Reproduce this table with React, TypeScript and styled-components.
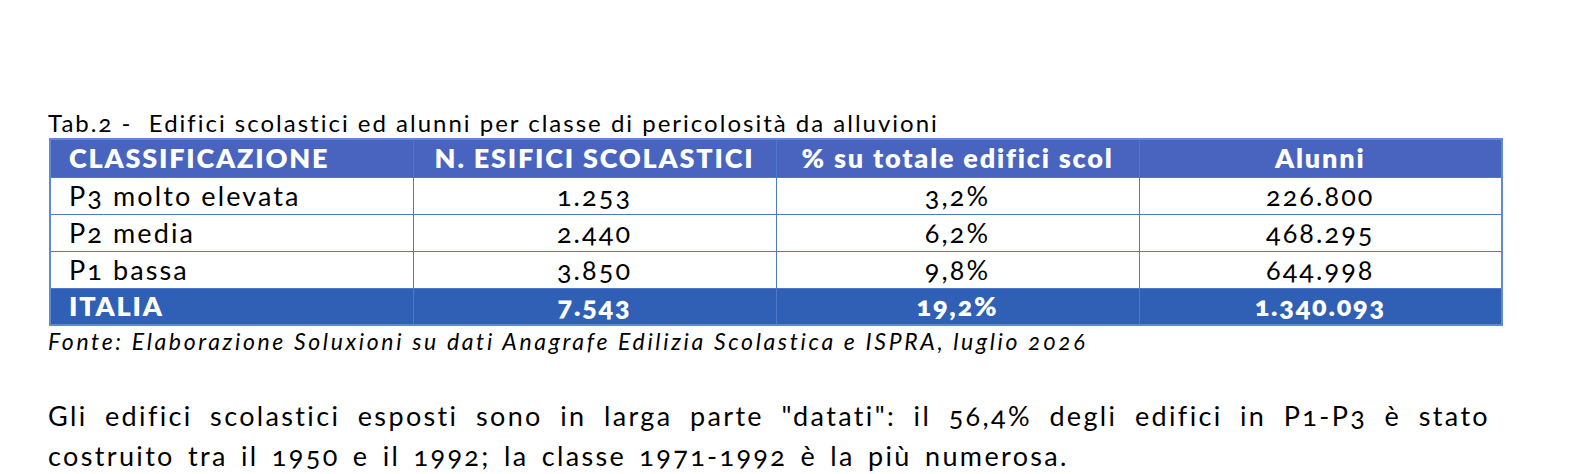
import React from "react";
import styled, { createGlobalStyle } from "styled-components";

const Global = createGlobalStyle`
  html, body { margin: 0; padding: 0; background: #ffffff; }
  body { font-family: Lato, "Open Sans", sans-serif; color: #000; }
`;

const Page = styled.div`
  width: 1582px;
  height: 474px;
  box-sizing: border-box;
  padding: 110px 0 0 48px;
  overflow: hidden;
`;

const Caption = styled.div`
  font-size: 24px;
  line-height: 26px;
  letter-spacing: 2px;
  margin-bottom: 2px;
  white-space: nowrap;
  font-variant-numeric: oldstyle-nums;
`;

const Table = styled.table`
  border-collapse: collapse;
  width: 1454px;
  table-layout: fixed;
  margin-left: 1px;
  border: 2px solid #6088d4;
  font-variant-numeric: oldstyle-nums;
`;

const Row = styled.tr<{ $variant?: "head" | "total" | "body" }>`
  height: ${(p) => (p.$variant === "head" ? 38 : 37)}px;
  background: ${(p) =>
    p.$variant === "head" ? "#4864bf" : p.$variant === "total" ? "#2f60b6" : "#ffffff"};
  color: ${(p) => (p.$variant === "body" ? "#000" : "#fff")};
  font-weight: ${(p) => (p.$variant === "body" ? 400 : 800)};
  letter-spacing: ${(p) => (p.$variant === "body" ? 2.1 : 1.8)}px;
`;

const Cell = styled.td<{ $align?: "left" | "center" }>`
  border: 1px solid #4f78c8;
  padding: 0 0 0 ${(p) => (p.$align === "left" ? 18 : 0)}px;
  text-align: ${(p) => p.$align ?? "center"};
  font-size: 27px;
  line-height: 30px;
  white-space: nowrap;
  vertical-align: middle;
`;

const Source = styled.div`
  font-style: italic;
  font-size: 23px;
  line-height: 26px;
  letter-spacing: 2.65px;
  margin-top: 2px;
  white-space: nowrap;
  font-variant-numeric: oldstyle-nums;
`;

const Paragraph = styled.p`
  margin: 42px 0 0 0;
  width: 1442px;
  font-size: 27px;
  line-height: 40px;
  letter-spacing: 2.35px;
  word-spacing: 4px;
  text-align: justify;
  font-variant-numeric: oldstyle-nums;
`;

type RowData = { label: string; n: string; pct: string; alunni: string };

const rows: RowData[] = [
  { label: "P3 molto elevata", n: "1.253", pct: "3,2%", alunni: "226.800" },
  { label: "P2 media", n: "2.440", pct: "6,2%", alunni: "468.295" },
  { label: "P1 bassa", n: "3.850", pct: "9,8%", alunni: "644.998" },
];

export default function App() {
  return (
    <>
      <Global />
      <Page>
        <Caption>Tab.2 -&nbsp; Edifici scolastici ed alunni per classe di pericolosità da alluvioni</Caption>
        <Table>
          <tbody>
            <Row $variant="head">
              <Cell $align="left">CLASSIFICAZIONE</Cell>
              <Cell>N. ESIFICI SCOLASTICI</Cell>
              <Cell>% su totale edifici scol</Cell>
              <Cell>Alunni</Cell>
            </Row>
            {rows.map((r) => (
              <Row key={r.label} $variant="body">
                <Cell $align="left">{r.label}</Cell>
                <Cell>{r.n}</Cell>
                <Cell>{r.pct}</Cell>
                <Cell>{r.alunni}</Cell>
              </Row>
            ))}
            <Row $variant="total">
              <Cell $align="left">ITALIA</Cell>
              <Cell>7.543</Cell>
              <Cell>19,2%</Cell>
              <Cell>1.340.093</Cell>
            </Row>
          </tbody>
        </Table>
        <Source>Fonte: Elaborazione Soluxioni su dati Anagrafe Edilizia Scolastica e ISPRA, luglio 2026</Source>
        <Paragraph>
          Gli edifici scolastici esposti sono in larga parte "datati": il 56,4% degli edifici in P1-P3 è stato
          costruito tra il 1950 e il 1992; la classe 1971-1992 è la più numerosa.
        </Paragraph>
      </Page>
    </>
  );
}
